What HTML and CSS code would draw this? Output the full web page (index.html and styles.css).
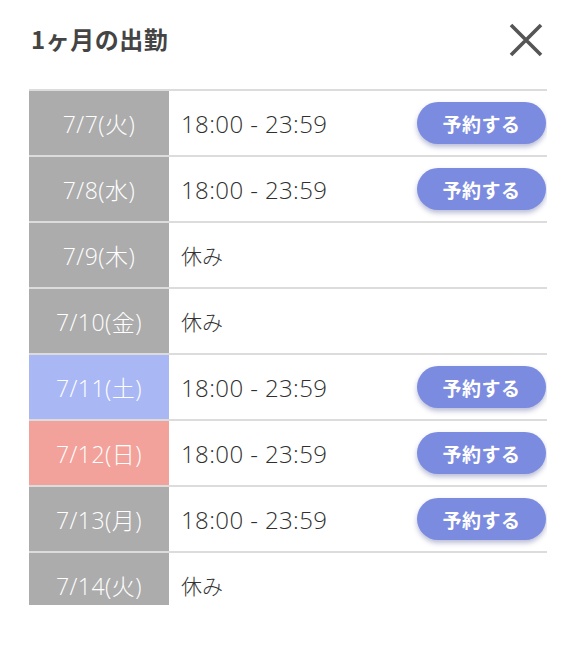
FILE: index.html
```html
<!DOCTYPE html>
<html lang="ja">
<head>
<meta name="viewport" content="width=device-width, initial-scale=1">
<title>1ヶ月の出勤</title>
<link rel="stylesheet" href="styles.css">
</head>
<body>

<div class="modal">
  <div class="modalHead">
    <h2 class="modalTitle">1ヶ月の出勤</h2>
    <span class="closeBtn">
      <svg width="36" height="36" viewBox="0 0 36 36">
        <path d="M3 3 L33 33 M33 3 L3 33" stroke="#555" stroke-width="3.6" fill="none"/>
      </svg>
    </span>
  </div>

  <div class="schedule">
    <div class="row">
      <div class="day">7/7(火)</div>
      <div class="slot"><span class="time">18:00 - 23:59</span><button class="reserve">予約する</button></div>
    </div>
    <div class="row">
      <div class="day">7/8(水)</div>
      <div class="slot"><span class="time">18:00 - 23:59</span><button class="reserve">予約する</button></div>
    </div>
    <div class="row">
      <div class="day">7/9(木)</div>
      <div class="slot"><span class="off">休み</span></div>
    </div>
    <div class="row">
      <div class="day">7/10(金)</div>
      <div class="slot"><span class="off">休み</span></div>
    </div>
    <div class="row">
      <div class="day sat">7/11(土)</div>
      <div class="slot"><span class="time">18:00 - 23:59</span><button class="reserve">予約する</button></div>
    </div>
    <div class="row">
      <div class="day sun">7/12(日)</div>
      <div class="slot"><span class="time">18:00 - 23:59</span><button class="reserve">予約する</button></div>
    </div>
    <div class="row">
      <div class="day">7/13(月)</div>
      <div class="slot"><span class="time">18:00 - 23:59</span><button class="reserve">予約する</button></div>
    </div>
    <div class="row">
      <div class="day">7/14(火)</div>
      <div class="slot"><span class="off">休み</span></div>
    </div>
  </div>
</div>

</body>
</html>
```

FILE: styles.css
```css
body {
    margin: 0;
    background-color: white;
    font-family: "Noto Sans CJK JP", "Noto Sans", sans-serif;
    color: #333;
}

.modal {
    padding: 0 29px;
}

.modalHead {
    height: 89px;
    display: flex;
    align-items: flex-start;
    justify-content: space-between;
    padding-top: 23px;
    box-sizing: border-box;
}

.modalTitle {
    margin: 0;
    margin-left: 2px;
    font-size: 24px;
    line-height: 32px;
    letter-spacing: 0.5px;
    font-weight: bold;
    color: #444;
}

.closeBtn {
    display: flex;
    margin-right: 3px;
    margin-top: -1px;
}

.schedule {
    height: 514px;
    overflow: hidden;
    border-top: 2px solid #dcdcdc;
}

.row {
    display: flex;
    height: 64px;
    border-bottom: 2px solid #dcdcdc;
}

.day {
    width: 140px;
    flex-shrink: 0;
    background-color: #acacac;
    color: white;
    font-size: 23px;
    letter-spacing: 0.5px;
    display: flex;
    align-items: center;
    justify-content: center;
    font-family: "Open Sans", "Noto Sans CJK JP", sans-serif;
    font-weight: 300;
}

.day.sat {
    background-color: #a9b8f4;
}

.day.sun {
    background-color: #f2a29b;
}

.slot {
    flex: 1;
    display: flex;
    align-items: center;
    justify-content: space-between;
    padding-left: 12px;
}

.time {
    font-size: 24px;
    letter-spacing: 0.4px;
    font-family: "Open Sans", "Noto Sans CJK JP", sans-serif;
    font-weight: 300;
    color: #2f2f2f;
}

.off {
    font-size: 21px;
    font-weight: 300;
    color: #333;
}

.reserve {
    width: 129px;
    height: 42px;
    margin-right: 1px;
    border: none;
    border-radius: 21px;
    background-color: #7b8bdf;
    color: white;
    font-family: "Noto Sans CJK JP", sans-serif;
    font-size: 19px;
    font-weight: bold;
    letter-spacing: 0.5px;
    box-shadow: 0 3px 5px rgba(60, 70, 140, 0.35);
}
```
